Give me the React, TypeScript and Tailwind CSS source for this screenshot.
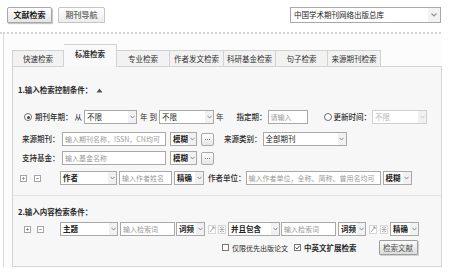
import { clsx } from "clsx";

const TABS = ["快速检索", "标准检索", "专业检索", "作者发文检索", "科研基金检索", "句子检索", "来源期刊检索"];
const TAB_W = ["w-[52px]", "w-[53px]", "w-[53px]", "w-[54px]", "w-[52px]", "w-[52px]", "w-[53px]"];

function Arrow({ disabled }: { disabled?: boolean }) {
  return (
    <div className="flex h-full w-[8px] shrink-0 items-center justify-center bg-[#f1f1f1]">
      <svg width="5" height="4" viewBox="0 0 5 4">
        <path d="M0.5 0.8 L2.5 3 L4.5 0.8" fill="none" stroke={disabled ? "#c5c9ce" : "#7f8a96"} strokeWidth="1" />
      </svg>
    </div>
  );
}

function Select({ className, text, bold, disabled }: { className: string; text: string; bold?: boolean; disabled?: boolean }) {
  return (
    <div
      className={clsx(
        "flex h-[14px] shrink-0 items-center border bg-white",
        disabled ? "border-[#cfcfcf]" : "border-[#a9a9a9]",
        className
      )}
    >
      <span
        className={clsx(
          "flex-1 whitespace-nowrap pl-[2px] text-[7.5px] leading-[12px]",
          disabled ? "text-[#b5b5b5]" : "text-[#222]",
          bold && "font-bold"
        )}
      >
        {text}
      </span>
      <Arrow disabled={disabled} />
    </div>
  );
}

function Input({ className, placeholder }: { className: string; placeholder: string }) {
  return (
    <div className={clsx("flex h-[14px] shrink-0 items-center border border-[#a9a9a9] bg-white", className)}>
      <span className="whitespace-nowrap pl-[2px] text-[7px] leading-[12px] text-[#9a9a9a]">{placeholder}</span>
    </div>
  );
}

function Dots({ className }: { className: string }) {
  return (
    <div
      className={clsx(
        "flex h-[13px] w-[13px] shrink-0 items-center justify-center gap-[1px] rounded-[2px] border border-[#a9a9a9] bg-gradient-to-b from-white to-[#e6e6e6]",
        className
      )}
    >
      <div className="h-[1px] w-[1px] bg-[#777]" />
      <div className="h-[1px] w-[1px] bg-[#777]" />
      <div className="h-[1px] w-[1px] bg-[#777]" />
    </div>
  );
}

function Label({ className, children, bold }: { className?: string; children: string; bold?: boolean }) {
  return (
    <span className={clsx("shrink-0 whitespace-nowrap text-[7.5px] leading-[12px] text-[#2a2a2a]", bold && "font-bold", className)}>
      {children}
    </span>
  );
}

function Radio({ checked, className }: { checked?: boolean; className: string }) {
  return (
    <div className={clsx("flex h-[8px] w-[8px] shrink-0 items-center justify-center rounded-full border border-[#6d6d6d] bg-white", className)}>
      {checked && <div className="h-[3px] w-[3px] rounded-full bg-[#444]" />}
    </div>
  );
}

function Check({ checked, className }: { checked?: boolean; className: string }) {
  return (
    <div className={clsx("flex h-[7px] w-[7px] shrink-0 items-center justify-center border border-[#777] bg-white", className)}>
      {checked && (
        <svg width="5" height="5" viewBox="0 0 5 5">
          <path d="M0.6 2.5 L2 4 L4.5 0.8" fill="none" stroke="#333" strokeWidth="0.9" />
        </svg>
      )}
    </div>
  );
}

function PlusMinus({ minus, className }: { minus?: boolean; className: string }) {
  return (
    <svg width="7" height="7" viewBox="0 0 7 7" className={clsx("shrink-0", className)}>
      <rect x="0.5" y="0.5" width="6" height="6" fill="#fff" stroke="#a5a5a5" />
      <path d="M2 3.5 H5" stroke="#888" strokeWidth="0.8" />
      {!minus && <path d="M3.5 2 V5" stroke="#888" strokeWidth="0.8" />}
    </svg>
  );
}

function ToolIcon({ kind, className }: { kind: "a" | "b"; className: string }) {
  return (
    <svg width="8" height="9" viewBox="0 0 8 9" className={clsx("shrink-0", className)}>
      <rect x="0.5" y="0.5" width="7" height="8" fill="#fff" stroke="#b0b0b0" strokeDasharray="1 1" />
      {kind === "a" ? (
        <path d="M2 7 L6 2 M4 2 H6 V4" fill="none" stroke="#8a8a8a" strokeWidth="0.8" />
      ) : (
        <path d="M4 1.5 V7.5 M1.5 4.5 H6.5 M2 2 L3 3 M6 2 L5 3 M2 7 L3 6 M6 7 L5 6" fill="none" stroke="#8a8a8a" strokeWidth="0.7" />
      )}
    </svg>
  );
}

export default function App() {
  return (
    <div className="h-[276px] w-[456px] overflow-hidden bg-white font-[family-name:'Noto_Sans_CJK_SC','Liberation_Sans',sans-serif]">
      {/* top bar */}
      <div className="flex h-[32px] items-start pt-[7px]">
        <div className="ml-[7px] flex h-[16px] w-[45px] items-center justify-center rounded-t-[2px] border border-[#a8a8a8] bg-gradient-to-b from-white to-[#e4e4e4] shadow-[1px_1px_1px_rgba(0,0,0,0.25)]">
          <span className="text-[8px] font-bold leading-[12px] text-[#222]">文献检索</span>
        </div>
        <div className="ml-[6px] flex h-[16px] w-[47px] items-center justify-center rounded-t-[2px] border border-[#c4c4c4] bg-gradient-to-b from-white to-[#ececec]">
          <span className="text-[8px] font-bold leading-[12px] text-[#777]">期刊导航</span>
        </div>
        <div className="ml-auto mr-[15px] flex h-[16px] w-[151px] items-center border border-[#a9a9a9] bg-white">
          <span className="flex-1 pl-[3px] text-[7.5px] leading-[12px] text-[#222]">中国学术期刊网络出版总库</span>
          <div className="flex h-full w-[12px] items-center justify-center bg-[#f3f3f3]">
            <svg width="6" height="4" viewBox="0 0 6 4">
              <path d="M0.5 0.5 L3 3 L5.5 0.5" fill="none" stroke="#8a949e" strokeWidth="1.1" />
            </svg>
          </div>
        </div>
      </div>
      <div className="h-0 w-[441px] border-t-2 border-dotted border-[#d4d4d4]" />

      {/* outer panel */}
      <div className="ml-[3px] w-[439px] border-l border-[#dadada] bg-[#fcfcfc] pl-[8px] pt-[10px]">
        <div className="flex h-[22px] items-end">
          {TABS.map((t, i) => {
            const active = i === 1;
            return (
              <div
                key={t}
                className={clsx(
                  "flex shrink-0 items-center justify-center border-t border-r border-[#d2d2d2]",
                  TAB_W[i],
                  i === 0 && "border-l",
                  active ? "relative z-10 -mb-px h-[23px] bg-[#f9f9f9] pb-[4px]" : "h-[16px] bg-[#f2f2f2]"
                )}
              >
                <span className={clsx("text-[7.5px] leading-[12px] text-[#333]", active && "font-bold")}>{t}</span>
              </div>
            );
          })}
        </div>

        {/* content box */}
        <div className="w-[430px] border border-[#d5d5d5] bg-[#f7f7f7] pb-[11px]">
          <div className="mt-[17px] flex h-[12px] items-center pl-[5px]">
            <Label bold>1.输入检索控制条件：</Label>
            <svg width="7" height="5" viewBox="0 0 7 5" className="ml-[4px]">
              <path d="M0.5 4.5 L3.5 0.5 L6.5 4.5 Z" fill="#555" />
            </svg>
          </div>

          {/* row 1 */}
          <div className="mt-[14px] flex h-[14px] items-center">
            <Radio checked className="ml-[11px]" />
            <Label className="ml-[3px] font-medium">期刊年期：</Label>
            <Label className="ml-[2px]">从</Label>
            <Select className="ml-[2px] w-[53px]" text="不限" />
            <Label className="ml-[3px]">年</Label>
            <Label className="ml-[2px]">到</Label>
            <Select className="ml-[2px] w-[55px]" text="不限" />
            <Label className="ml-[2px]">年</Label>
            <Label className="ml-[13px] font-medium">指定期：</Label>
            <Input className="ml-[1px] w-[40px]" placeholder="请输入" />
            <Radio className="ml-[16px]" />
            <Label className="ml-[2px] font-medium">更新时间：</Label>
            <Select className="ml-[1px] w-[55px]" text="不限" disabled />
          </div>

          {/* row 2 */}
          <div className="mt-[8px] flex h-[14px] items-center">
            <Label className="ml-[9px] w-[39px] font-medium">来源期刊：</Label>
            <Input className="ml-[1px] w-[104px]" placeholder="输入期刊名称，ISSN，CN均可" />
            <Select className="ml-[4px] w-[27px]" text="模糊" bold />
            <Dots className="ml-[4px]" />
            <Label className="ml-[10px] font-medium">来源类别：</Label>
            <Select className="ml-[1px] w-[84px]" text="全部期刊" />
          </div>

          {/* row 3 */}
          <div className="mt-[5px] flex h-[14px] items-center">
            <Label className="ml-[9px] w-[39px] font-medium">支持基金：</Label>
            <Input className="ml-[1px] w-[104px]" placeholder="输入基金名称" />
            <Select className="ml-[4px] w-[27px]" text="模糊" bold />
            <Dots className="ml-[4px]" />
          </div>

          {/* row 4 */}
          <div className="mt-[6px] flex h-[14px] items-center">
            <PlusMinus className="ml-[7px]" />
            <PlusMinus minus className="ml-[7px]" />
            <Select className="ml-[19px] w-[57px]" text="作者" bold />
            <Input className="ml-[2px] w-[53px]" placeholder="输入作者姓名" />
            <Select className="ml-[2px] w-[30px]" text="精确" bold />
            <Label className="ml-[4px] font-medium">作者单位：</Label>
            <Input className="ml-[0px] w-[135px]" placeholder="输入作者单位，全称、简称、曾用名均可" />
            <Select className="ml-[2px] w-[29px]" text="模糊" bold />
          </div>

          {/* section 2 */}
          <div className="mt-[10px] border-t border-[#e3e3e3]">
            <div className="mt-[10px] flex h-[12px] items-center pl-[5px]">
              <Label bold>2.输入内容检索条件：</Label>
            </div>

            <div className="mt-[4px] flex h-[14px] items-center">
              <PlusMinus className="ml-[11px]" />
              <PlusMinus minus className="ml-[6px]" />
              <Select className="ml-[16px] w-[58px]" text="主题" bold />
              <Input className="ml-[2px] w-[55px]" placeholder="输入检索词" />
              <Select className="ml-[1px] w-[29px]" text="词频" bold />
              <ToolIcon kind="a" className="ml-[3px]" />
              <ToolIcon kind="b" className="ml-[2px]" />
              <Select className="ml-[2px] w-[52px]" text="并且包含" bold />
              <Input className="ml-[1px] w-[55px]" placeholder="输入检索词" />
              <Select className="ml-[2px] w-[28px]" text="词频" bold />
              <ToolIcon kind="a" className="ml-[3px]" />
              <ToolIcon kind="b" className="ml-[3px]" />
              <Select className="ml-[2px] w-[29px]" text="精确" bold />
            </div>

            <div className="mt-[4px] flex h-[15px] items-center">
              <Check className="ml-[209px]" />
              <Label className="ml-[3px] text-[7px]">仅限优先出版论文</Label>
              <Check checked className="ml-[6px]" />
              <Label bold className="ml-[3px]">中英文扩展检索</Label>
              <div className="ml-[22px] flex h-[15px] w-[39px] items-center justify-center rounded-[1px] border border-[#9d9d9d] bg-gradient-to-b from-[#fafafa] to-[#dcdcdc] shadow-[1px_1px_0_rgba(0,0,0,0.15)]">
                <span className="text-[7.5px] leading-[12px] text-[#555]">检索文献</span>
              </div>
            </div>
          </div>
        </div>
      </div>
    </div>
  );
}
